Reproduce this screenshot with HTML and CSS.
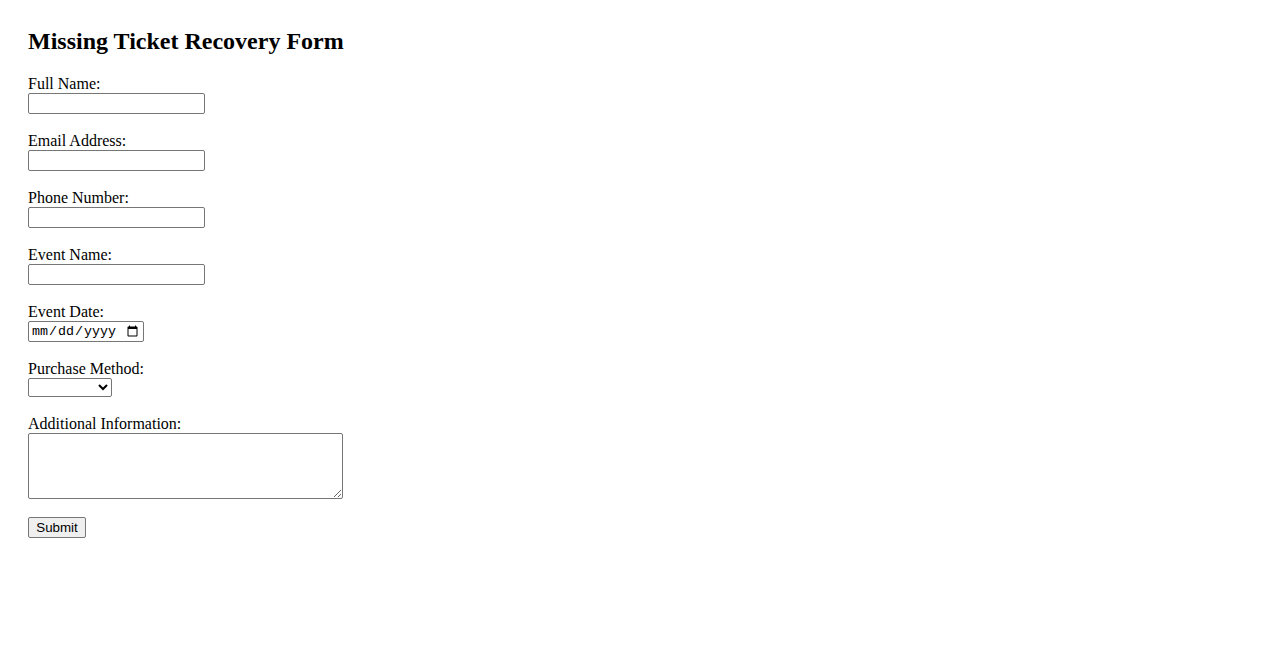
FILE: index.html
```html
<!DOCTYPE html>
<html lang="en">
<head>
<meta charset="utf-8">
<title>Missing Ticket Recovery Form</title>
<link rel="stylesheet" href="styles.css">
</head>
<body>
<main class="page">
  <h2 class="title">Missing Ticket Recovery Form</h2>
  <form class="form">
    <div class="field">
      <label for="name">Full Name:</label>
      <input class="text" type="text" id="name">
    </div>
    <div class="field">
      <label for="email">Email Address:</label>
      <input class="text" type="email" id="email">
    </div>
    <div class="field">
      <label for="phone">Phone Number:</label>
      <input class="text" type="tel" id="phone">
    </div>
    <div class="field">
      <label for="event">Event Name:</label>
      <input class="text" type="text" id="event">
    </div>
    <div class="field">
      <label for="date">Event Date:</label>
      <input class="date" type="date" id="date">
    </div>
    <div class="field">
      <label for="method">Purchase Method:</label>
      <select class="select" id="method">
        <option value=""></option>
        <option>Online</option>
        <option>Box Office</option>
        <option>Phone</option>
      </select>
    </div>
    <div class="field">
      <label for="info">Additional Information:</label>
      <textarea class="area" id="info"></textarea>
    </div>
    <div class="field">
      <button class="submit" type="submit">Submit</button>
    </div>
  </form>
</main>
</body>
</html>
```
FILE: styles.css
```css
html, body {
  margin: 0;
  padding: 0;
  background: #fff;
}
body {
  font-family: "Liberation Serif", "Times New Roman", serif;
  font-size: 16px;
  color: #000;
}
.page {
  padding: 27px 28px 28px 28px;
}
.title {
  margin: 0 0 20px 0;
  font-size: 24px;
  line-height: 28px;
  font-weight: bold;
}
.form {
  display: flex;
  flex-direction: column;
  gap: 18px;
  align-items: flex-start;
}
.field {
  display: flex;
  flex-direction: column;
  align-items: flex-start;
}
.field label {
  line-height: 18px;
  height: 18px;
}
.text,
.date,
.select,
.area,
.submit {
  font-family: "Liberation Sans", Arial, sans-serif;
  font-size: 13.33px;
  box-sizing: border-box;
  margin: 0;
  border: 1px solid #767676;
  border-radius: 2px;
  background: #fff;
  color: #000;
}
.text {
  width: 177px;
  height: 21px;
  padding: 1px 2px;
}
.date {
  width: 116px;
  height: 21px;
  padding: 1px 2px;
  font-family: "Liberation Mono", "Courier New", monospace;
  font-size: 13.33px;
}
.select {
  width: 84px;
  height: 19px;
  padding: 0;
}
.area {
  width: 315px;
  height: 66px;
  padding: 2px;
  resize: both;
}
.submit {
  width: 58px;
  height: 21px;
  padding: 1px 6px;
  background: #efefef;
  font-size: 13.33px;
  cursor: pointer;
}
```
